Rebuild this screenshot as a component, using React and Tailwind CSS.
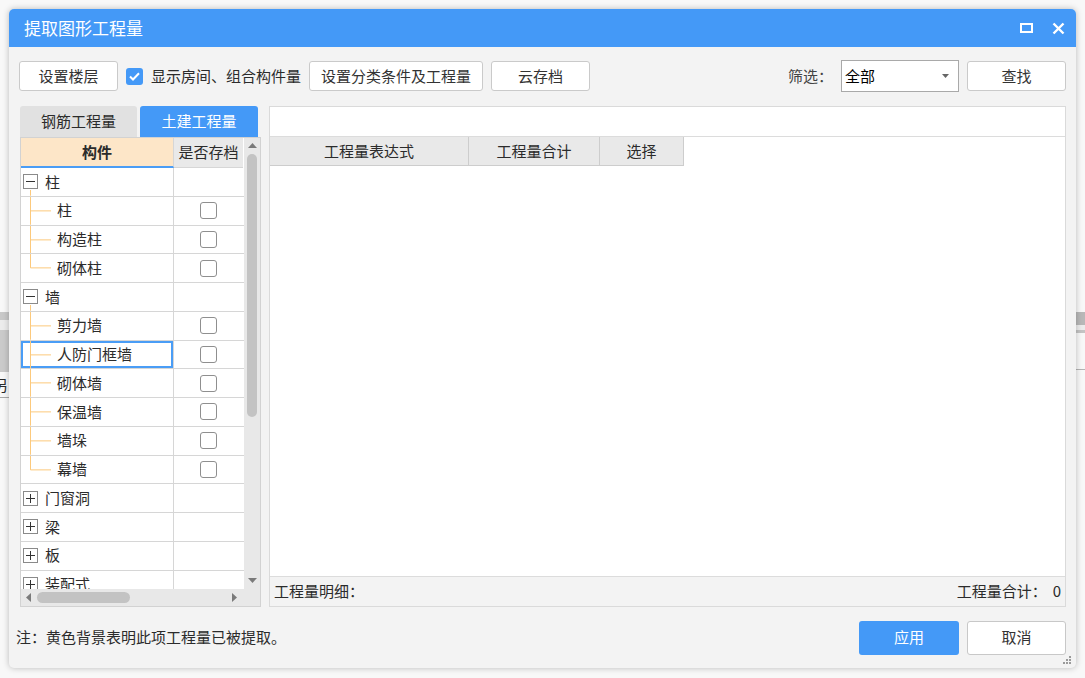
import React from "react";

const rows = [
  { g: true, label: "柱", open: true },
  { label: "柱" },
  { label: "构造柱" },
  { label: "砌体柱", last: true },
  { g: true, label: "墙", open: true },
  { label: "剪力墙" },
  { label: "人防门框墙", sel: true },
  { label: "砌体墙" },
  { label: "保温墙" },
  { label: "墙垛" },
  { label: "幕墙", last: true },
  { g: true, label: "门窗洞" },
  { g: true, label: "梁" },
  { g: true, label: "板" },
  { g: true, label: "装配式" },
];

function Btn({ children, className = "" }) {
  return (
    <button className={`h-[30px] bg-white border border-[#cacaca] rounded-[3px] text-[15px] text-[#333] ${className}`}>
      {children}
    </button>
  );
}

function ExpandBox({ open }) {
  return (
    <div className="ml-[2px] w-[15px] h-[15px] border border-[#8a8a8a] bg-white flex items-center justify-center relative z-10">
      <svg width="9" height="9" viewBox="0 0 9 9">
        <line x1="0" y1="4.5" x2="9" y2="4.5" stroke="#333" strokeWidth="1" />
        {!open && <line x1="4.5" y1="0" x2="4.5" y2="9" stroke="#333" strokeWidth="1" />}
      </svg>
    </div>
  );
}

function TreeRow({ r }) {
  return (
    <div className="flex h-[28.75px] shrink-0 border-b border-[#d6d6d6] bg-white">
      <div
        className={`relative flex items-center w-[153px] border-r border-[#d6d6d6] ${
          r.sel ? "shadow-[inset_0_0_0_2px_#4a9df6]" : ""
        }`}
      >
        {r.g ? (
          <>
            {r.open && (
              <svg className="absolute left-0 top-0 h-full w-[36px]">
                <line x1="9.5" y1="22" x2="9.5" y2="100%" stroke="#fcc97c" strokeWidth="1" />
              </svg>
            )}
            <ExpandBox open={r.open} />
            <span className="ml-[7px]">{r.label}</span>
          </>
        ) : (
          <>
            <svg className="absolute left-0 top-0 h-full w-[36px]">
              <line x1="9.5" y1="0" x2="9.5" y2={r.last ? "50%" : "100%"} stroke="#fcc97c" strokeWidth="1" />
              <line x1="9.5" y1="50%" x2="30" y2="50%" stroke="#fcc97c" strokeWidth="1" />
            </svg>
            <span className="ml-[36px]">{r.label}</span>
          </>
        )}
      </div>
      <div className="w-[69px] flex items-center justify-center">
        {!r.g && <div className="w-[17px] h-[17px] border border-[#8f8f8f] rounded-[3px] bg-white" />}
      </div>
    </div>
  );
}

function Tri({ dir }) {
  const pts = {
    up: "0,5 9,5 4.5,0",
    down: "0,0 9,0 4.5,5",
    left: "5,0 5,9 0,4.5",
    right: "0,0 0,9 5,4.5",
  }[dir];
  const vertical = dir === "up" || dir === "down";
  return (
    <svg width={vertical ? 9 : 5} height={vertical ? 5 : 9} viewBox={vertical ? "0 0 9 5" : "0 0 5 9"}>
      <polygon points={pts} fill="#7a7a7a" />
    </svg>
  );
}

export default function App() {
  return (
    <div className="relative w-[1085px] h-[678px] overflow-hidden bg-[#f8f8f8] font-['Noto_Sans_CJK_SC',sans-serif] text-[#2b2b2b]">
      {/* page behind the dialog */}
      <div className="flex justify-between h-full">
        <div className="w-[9px] flex flex-col">
          <div className="h-[312px]" />
          <div className="h-[8px] bg-[#c8c8c8]" />
          <div className="h-[10px] bg-[#ececec]" />
          <div className="h-[42px] bg-[#cacaca]" />
          <div className="h-[26px] border-b border-[#a8a8a8] text-[15px] leading-[26px] -ml-[7px] whitespace-nowrap">另</div>
        </div>
        <div className="w-[9px] flex flex-col">
          <div className="h-[312px]" />
          <div className="h-[13px] bg-[#b8b8b8]" />
          <div className="h-[5px] bg-[#ececec]" />
          <div className="h-[3px] bg-[#c4c4c4]" />
          <div className="h-[37px] border-b border-[#b4b4b4]" />
        </div>
      </div>

      {/* dialog */}
      <div className="absolute left-[9px] top-[9px] w-[1067px] h-[659px] rounded-[5px] bg-[#f3f3f3] shadow-[0_0_6px_rgba(0,0,0,0.25)] flex flex-col">
        <div className="h-[38px] shrink-0 bg-[#4499f7] rounded-t-[5px] flex items-center justify-between pl-[15px] pr-[11px]">
          <span className="text-white text-[17px]">提取图形工程量</span>
          <div className="flex items-center gap-[19px]">
            <div className="w-[13px] h-[10px] border-2 border-white" />
            <svg width="13" height="13" viewBox="0 0 13 13">
              <path d="M1.5 1.5 L11.5 11.5 M11.5 1.5 L1.5 11.5" stroke="white" strokeWidth="2.4" />
            </svg>
          </div>
        </div>

        <div className="mt-[13px] h-[32px] shrink-0 px-[10px] flex items-center">
          <Btn className="w-[99px]">设置楼层</Btn>
          <div className="ml-[8px] w-[17px] h-[17px] rounded-[3px] bg-[#4499f7] flex items-center justify-center">
            <svg width="11" height="9" viewBox="0 0 11 9">
              <path d="M1 4.5 L4 7.5 L10 1.2" stroke="white" strokeWidth="2" fill="none" />
            </svg>
          </div>
          <span className="ml-[8px] text-[15px]">显示房间、组合构件量</span>
          <Btn className="ml-[8px] w-[174px]">设置分类条件及工程量</Btn>
          <Btn className="ml-[8px] w-[99px]">云存档</Btn>
          <div className="flex-1" />
          <span className="text-[15px] text-[#444]">筛选：</span>
          <div className="ml-[8px] w-[118px] h-[32px] bg-white border border-[#a9a9a9] flex items-center justify-between pl-[3px] pr-[9px]">
            <span className="text-[15px] text-black">全部</span>
            <svg width="7" height="4" viewBox="0 0 7 4">
              <polygon points="0,0 7,0 3.5,4" fill="#666" />
            </svg>
          </div>
          <Btn className="ml-[8px] w-[99px]">查找</Btn>
        </div>

        <div className="mt-[14px] h-[501px] shrink-0 px-[10px] flex gap-[8px]">
          {/* left panel */}
          <div className="w-[242px] pl-[1px] flex flex-col">
            <div className="h-[31px] shrink-0 flex items-end gap-[3px]">
              <div className="w-[117px] h-[31px] rounded-t-[3px] bg-[#e1e1e1] flex items-center justify-center text-[15px]">
                钢筋工程量
              </div>
              <div className="w-[118px] h-[31px] rounded-t-[3px] bg-[#4499f7] flex items-center justify-center text-[15px] text-white">
                土建工程量
              </div>
            </div>
            <div className="flex-1 min-h-0 overflow-hidden border border-[#d2d2d2] bg-[#ececec] flex flex-col text-[15px]">
              <div className="flex-1 min-h-0 flex overflow-hidden">
                <div className="w-[223px] flex flex-col overflow-hidden bg-white">
                  <div className="h-[30px] shrink-0 flex">
                    <div className="w-[153px] border-r border-[#d6d6d6] border-b-2 border-b-[#4a9df6] bg-[#fde6c8] flex items-center justify-center font-bold">
                      构件
                    </div>
                    <div className="w-[69px] bg-[#e9e9e9] border-b border-[#d6d6d6] flex items-center justify-center whitespace-nowrap">
                      是否存档
                    </div>
                  </div>
                  {rows.map((r, i) => (
                    <TreeRow key={i} r={r} />
                  ))}
                </div>
                <div className="w-[16px] bg-[#e8e8e8] flex flex-col items-center">
                  <div className="mt-[5px]">
                    <Tri dir="up" />
                  </div>
                  <div className="mt-[6px] w-[10px] h-[263px] rounded-full bg-[#c3c3c3]" />
                  <div className="flex-1" />
                  <div className="mb-[6px]">
                    <Tri dir="down" />
                  </div>
                </div>
              </div>
              <div className="h-[17px] shrink-0 flex bg-[#e8e8e8]">
                <div className="w-[223px] flex items-center">
                  <div className="ml-[5px]">
                    <Tri dir="left" />
                  </div>
                  <div className="ml-[6px] w-[93px] h-[11px] rounded-full bg-[#c3c3c3]" />
                  <div className="flex-1" />
                  <div className="mr-[7px]">
                    <Tri dir="right" />
                  </div>
                </div>
              </div>
            </div>
          </div>

          {/* right panel */}
          <div className="flex-1 border border-[#dadada] bg-white flex flex-col text-[15px]">
            <div className="h-[30px] shrink-0 border-b border-[#dcdcdc]" />
            <div className="h-[29px] shrink-0 flex">
              <div className="w-[199px] bg-[#e9e9e9] border-r border-b border-[#cdcdcd] flex items-center justify-center">工程量表达式</div>
              <div className="w-[131px] bg-[#e9e9e9] border-r border-b border-[#cdcdcd] flex items-center justify-center">工程量合计</div>
              <div className="w-[84px] bg-[#e9e9e9] border-r border-b border-[#cdcdcd] flex items-center justify-center">选择</div>
            </div>
            <div className="flex-1" />
            <div className="h-[30px] shrink-0 bg-[#f3f3f3] border-t border-[#dcdcdc] flex items-center justify-between pl-[4px] pr-[4px]">
              <span>工程量明细：</span>
              <span>
                工程量合计：<span className="ml-[6px]">0</span>
              </span>
            </div>
          </div>
        </div>

        <div className="flex-1 flex items-center pl-[7px] pr-[10px]">
          <span className="text-[15px]">注：黄色背景表明此项工程量已被提取。</span>
          <div className="flex-1" />
          <button className="w-[100px] h-[34px] rounded-[3px] bg-[#4499f7] text-white text-[15px]">应用</button>
          <button className="ml-[8px] w-[99px] h-[34px] rounded-[3px] bg-white border border-[#c8c8c8] text-[15px] text-[#333]">
            取消
          </button>
        </div>

        <svg className="absolute right-[5px] bottom-[4px]" width="9" height="9" viewBox="0 0 9 9">
          <rect x="7" y="1" width="2" height="2" fill="#9a9a9a" />
          <rect x="4" y="4" width="2" height="2" fill="#9a9a9a" />
          <rect x="7" y="4" width="2" height="2" fill="#9a9a9a" />
          <rect x="1" y="7" width="2" height="2" fill="#9a9a9a" />
          <rect x="4" y="7" width="2" height="2" fill="#9a9a9a" />
          <rect x="7" y="7" width="2" height="2" fill="#9a9a9a" />
        </svg>
      </div>
    </div>
  );
}
